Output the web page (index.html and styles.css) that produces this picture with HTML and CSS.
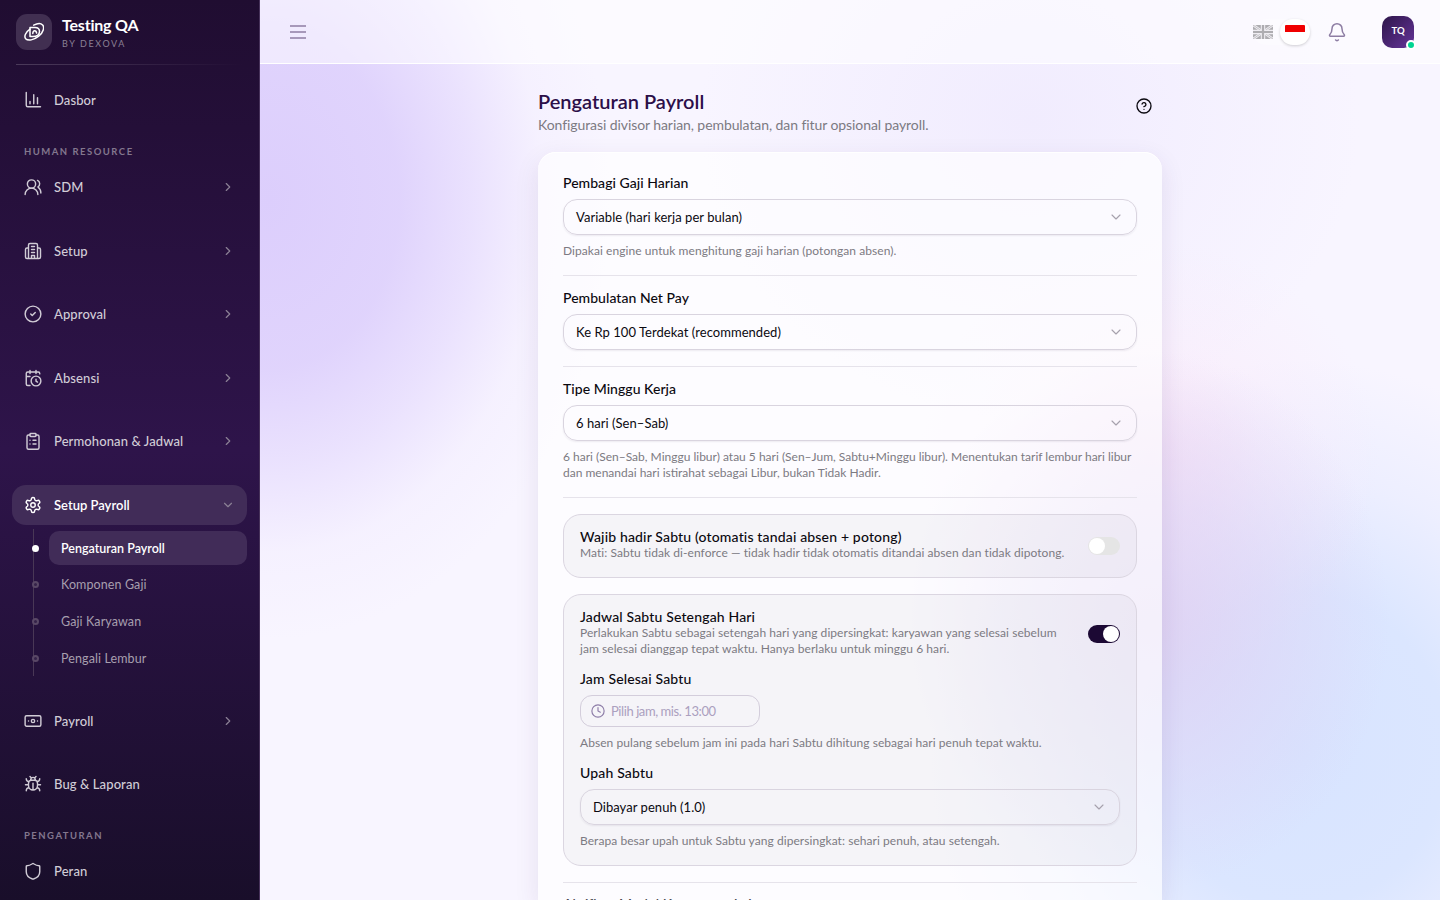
FILE: index.html
```html
<!DOCTYPE html>
<html lang="id">
<head>
<meta charset="utf-8">
<title>Pengaturan Payroll</title>
<link rel="stylesheet" href="styles.css">
</head>
<body>
<svg width="0" height="0" class="defs">
  <symbol id="chev" viewBox="0 0 24 24"><path d="m9 18 6-6-6-6"/></symbol>
  <symbol id="down" viewBox="0 0 24 24"><path d="m6 9 6 6 6-6"/></symbol>
</svg>
<div class="app">
  <aside class="sidebar">
    <div class="brand">
      <div class="logo"><svg viewBox="0 0 20 20"><path d="M6 5.500v9h2.700c4.800 0 6.800-2 6.800-5 0-2.700-1.800-4-4.500-4z"/><path d="M6 7.200C1.500 10.300-.2 14.400 1.700 16.700c2.300 2.600 8.200 1.400 13-2.500 4.800-3.900 6-9 3.900-11.200-1.700-1.800-5.300-1.600-8.900.2"/><path d="M8.800 11.500c.2-3.600 3.400-3.600 3.800-.4"/></svg></div>
      <div class="brand-text"><div class="brand-name">Testing QA</div><div class="brand-by">BY DEXOVA</div></div>
    </div>
    <div class="rule"></div>
    <nav class="nav">
      <a class="item first"><svg class="ico" viewBox="0 0 24 24"><path d="M3 2v17a2 2 0 0 0 2 2h17M8 17v-3M13 17V5M18 17V9"/></svg><span>Dasbor</span></a>
      <div class="section">HUMAN RESOURCE</div>
      <a class="item"><svg class="ico" viewBox="0 0 24 24"><circle cx="10" cy="8" r="5.500"/><path d="M18.500 22a8.500 8.500 0 0 0-17 0M22.500 20c0-3.370-2-6.500-4-8a5 5 0 0 0-.45-8.800"/></svg><span>SDM</span><svg class="chev"><use href="#chev"/></svg></a>
      <a class="item"><svg class="ico" viewBox="0 0 24 24"><path d="M6 22V4a2 2 0 0 1 2-2h8a2 2 0 0 1 2 2v18ZM6 8H4a2 2 0 0 0-2 2v10a2 2 0 0 0 2 2h2M18 8h2a2 2 0 0 1 2 2v10a2 2 0 0 1-2 2h-2M10 6h4M10 10h4M10 14h4M10 22v-4h4v4"/></svg><span>Setup</span><svg class="chev"><use href="#chev"/></svg></a>
      <a class="item"><svg class="ico" viewBox="0 0 24 24"><circle cx="12" cy="12" r="10.500"/><path d="m9 12 2 2 4-4"/></svg><span>Approval</span><svg class="chev"><use href="#chev"/></svg></a>
      <a class="item"><svg class="ico" viewBox="0 0 24 24"><path d="M21 6.500V6a2 2 0 0 0-2-2H5a2 2 0 0 0-2 2v14a2 2 0 0 0 2 2h3M16 2v4M8 2v4M3 10h5M18 17.500l-2-1.200V13.500"/><circle cx="16" cy="16" r="6.500"/></svg><span>Absensi</span><svg class="chev"><use href="#chev"/></svg></a>
      <a class="item"><svg class="ico" viewBox="0 0 24 24"><rect x="8" y="2" width="8" height="4" rx="1"/><path d="M16 4h2a2 2 0 0 1 2 2v15a2 2 0 0 1-2 2H6a2 2 0 0 1-2-2V6a2 2 0 0 1 2-2h2M12 11h4M12 16h4M8 11h.01M8 16h.01"/></svg><span>Permohonan &amp; Jadwal</span><svg class="chev"><use href="#chev"/></svg></a>
      <div class="group">
        <a class="item open"><svg class="ico" viewBox="0 0 24 24"><path d="M12.220 2h-.44a2 2 0 0 0-2 2v.18a2 2 0 0 1-1 1.730l-.43.25a2 2 0 0 1-2 0l-.15-.08a2 2 0 0 0-2.730.73l-.22.38a2 2 0 0 0 .73 2.730l.15.1a2 2 0 0 1 1 1.720v.51a2 2 0 0 1-1 1.740l-.15.09a2 2 0 0 0-.73 2.730l.22.38a2 2 0 0 0 2.730.73l.15-.08a2 2 0 0 1 2 0l.43.25a2 2 0 0 1 1 1.730V20a2 2 0 0 0 2 2h.44a2 2 0 0 0 2-2v-.18a2 2 0 0 1 1-1.730l.43-.25a2 2 0 0 1 2 0l.15.08a2 2 0 0 0 2.730-.73l.22-.39a2 2 0 0 0-.73-2.730l-.15-.08a2 2 0 0 1-1-1.740v-.5a2 2 0 0 1 1-1.740l.15-.09a2 2 0 0 0 .73-2.730l-.22-.38a2 2 0 0 0-2.730-.73l-.15.08a2 2 0 0 1-2 0l-.43-.25a2 2 0 0 1-1-1.730V4a2 2 0 0 0-2-2z"/><circle cx="12" cy="12" r="3"/></svg><span>Setup Payroll</span><svg class="chev"><use href="#down"/></svg></a>
        <div class="sub">
          <a class="subitem on"><i></i><span>Pengaturan Payroll</span></a>
          <a class="subitem"><i></i><span>Komponen Gaji</span></a>
          <a class="subitem"><i></i><span>Gaji Karyawan</span></a>
          <a class="subitem"><i></i><span>Pengali Lembur</span></a>
        </div>
      </div>
      <a class="item"><svg class="ico" viewBox="0 0 24 24"><rect x="1.500" y="5" width="21" height="14" rx="2"/><circle cx="12" cy="12" r="2.200"/><path d="M6 12h.01M18 12h.01"/></svg><span>Payroll</span><svg class="chev"><use href="#chev"/></svg></a>
      <a class="item bug"><svg class="ico" viewBox="0 0 24 24"><path d="m8 2 1.880 1.880M14.120 3.880 16 2M9 7.130v-1a3 3 0 1 1 6 0v1M12 20c-3.300 0-6-2.700-6-6v-3a4 4 0 0 1 4-4h4a4 4 0 0 1 4 4v3c0 3.300-2.700 6-6 6M12 20v-9M6.530 9C4.600 8.800 3 7.100 3 5M6 13H2M3 21c0-2.100 1.700-3.900 3.800-4M20.970 5c0 2.100-1.600 3.800-3.500 4M22 13h-4M17.200 17c2.100.1 3.800 1.900 3.800 4"/></svg><span>Bug &amp; Laporan</span></a>
      <div class="section">PENGATURAN</div>
      <a class="item last"><svg class="ico" viewBox="0 0 24 24"><path d="M21 13c0 5-3.500 8-8.300 9.700a2 2 0 0 1-1.400 0C6.500 21 3 18 3 13V6a1 1 0 0 1 1-1c2.500 0 5-1.200 7.200-2.700a1.200 1.200 0 0 1 1.600 0C15 3.800 17.500 5 20 5a1 1 0 0 1 1 1z"/></svg><span>Peran</span></a>
    </nav>
  </aside>
  <div class="page">
    <header class="topbar">
      <svg class="menu" viewBox="0 0 16 16"><path d="M.5 2h15M.5 8h15M.5 14h15"/></svg>
      <div class="tools">
        <div class="langs">
          <svg class="uk" viewBox="0 0 20 14"><path fill="#aeadb1" stroke="none" d="M0 0h20v14H0z"/><path d="M0 0l20 14M20 0L0 14" stroke="#efedf2" stroke-width="2.600"/><path d="M0 0l20 14M20 0L0 14" stroke="#b5b4b8" stroke-width=".8"/><path d="M10 0v14M0 7h20" stroke="#efedf2" stroke-width="4.400"/><path d="M10 0v14M0 7h20" stroke="#aeadb1" stroke-width="2.200"/></svg>
          <div class="lang-on"><div class="flag-id"></div></div>
        </div>
        <svg class="bell" viewBox="0 0 24 24"><path d="M10.300 21.500a2 2 0 0 0 3.400 0M3.260 15.330A1 1 0 0 0 4 17h16a1 1 0 0 0 .740-1.670C19.410 13.960 18 12.500 18 8A6 6 0 0 0 6 8c0 4.500-1.410 5.960-2.740 7.330"/></svg>
        <div class="avatar">TQ<i></i></div>
      </div>
    </header>
    <main class="main">
      <div class="head">
        <div><h1>Pengaturan Payroll</h1><p class="lead">Konfigurasi divisor harian, pembulatan, dan fitur opsional payroll.</p></div>
        <svg class="help" viewBox="0 0 24 24"><circle cx="12" cy="12" r="10.500"/><path d="M9.090 9a3 3 0 0 1 5.830 1c0 2-3 3-3 3M12 17h.01"/></svg>
      </div>
      <div class="card">
        <section class="field">
          <label>Pembagi Gaji Harian</label>
          <div class="select"><span>Variable (hari kerja per bulan)</span><svg><use href="#down"/></svg></div>
          <p class="hint">Dipakai engine untuk menghitung gaji harian (potongan absen).</p>
        </section>
        <section class="field">
          <label>Pembulatan Net Pay</label>
          <div class="select"><span>Ke Rp 100 Terdekat (recommended)</span><svg><use href="#down"/></svg></div>
        </section>
        <section class="field week">
          <label>Tipe Minggu Kerja</label>
          <div class="select"><span>6 hari (Sen–Sab)</span><svg><use href="#down"/></svg></div>
          <p class="hint tight">6 hari (Sen–Sab, Minggu libur) atau 5 hari (Sen–Jum, Sabtu+Minggu libur). Menentukan tarif lembur hari libur<br>dan menandai hari istirahat sebagai Libur, bukan Tidak Hadir.</p>
        </section>
        <div class="panel one">
          <div class="row"><div><label class="wide">Wajib hadir Sabtu (otomatis tandai absen + potong)</label><p class="hint">Mati: Sabtu tidak di-enforce — tidak hadir tidak otomatis ditandai absen dan tidak dipotong.</p></div><div class="switch"><i></i></div></div>
        </div>
        <div class="panel two">
          <div class="row"><div><label class="wide">Jadwal Sabtu Setengah Hari</label><p class="hint">Perlakukan Sabtu sebagai setengah hari yang dipersingkat: karyawan yang selesai sebelum<br>jam selesai dianggap tepat waktu. Hanya berlaku untuk minggu 6 hari.</p></div><div class="switch active"><i></i></div></div>
          <div class="inner">
            <label class="wide">Jam Selesai Sabtu</label>
            <div class="time"><svg viewBox="0 0 24 24"><circle cx="12" cy="12" r="10.500"/><path d="M12 6v6l4 2"/></svg><span>Pilih jam, mis. 13:00</span></div>
            <p class="hint">Absen pulang sebelum jam ini pada hari Sabtu dihitung sebagai hari penuh tepat waktu.</p>
          </div>
          <div class="inner">
            <label class="wide">Upah Sabtu</label>
            <div class="select"><span>Dibayar penuh (1.0)</span><svg><use href="#down"/></svg></div>
            <p class="hint">Berapa besar upah untuk Sabtu yang dipersingkat: sehari penuh, atau setengah.</p>
          </div>
        </div>
        <div class="next"><label>Aktifkan Modul Komponen Lain</label></div>
      </div>
    </main>
  </div>
</div>
</body>
</html>
```

FILE: styles.css
```css
* { box-sizing: border-box; margin: 0; padding: 0; }
body { height: 900px; overflow: hidden; font-family: Lato, "Liberation Sans", sans-serif; color: #0b0910; }
svg { fill: none; stroke: currentColor; stroke-width: 2; stroke-linecap: round; stroke-linejoin: round; flex: none; display: block; }
.defs { position: absolute; }
i { display: block; }
.app { display: flex; height: 900px; overflow: hidden;
  background:
    radial-gradient(ellipse 340px 440px at 270px 200px, rgba(218,203,252,.93) 0%, rgba(220,206,252,.86) 38%, rgba(226,214,253,.62) 60%, rgba(238,230,254,.28) 80%, rgba(248,245,255,0) 100%),
    radial-gradient(ellipse 240px 270px at 1150px 620px, rgba(222,206,241,.8) 0%, rgba(222,210,244,.55) 45%, rgba(230,220,249,0) 100%),
    radial-gradient(ellipse 230px 220px at 1150px 460px, rgba(250,220,242,.65) 0%, rgba(250,228,247,.3) 50%, rgba(248,240,255,0) 100%),
    radial-gradient(ellipse 370px 390px at 1300px 750px, rgba(214,227,255,.95) 0%, rgba(215,228,255,.88) 40%, rgba(226,232,255,.5) 70%, rgba(248,245,255,0) 100%),
    radial-gradient(ellipse 330px 300px at 1030px 120px, rgba(240,235,254,.9) 0%, rgba(248,245,255,0) 100%),
    #f8f5ff; }
.sidebar { width: 260px; flex: none; height: 900px; overflow: hidden; color: #d1ccd6; border-right: 1px solid #47325a;
  background: linear-gradient(180deg, #200d31 0%, #2e144a 50%, #190e2a 100%); }
.brand { display: flex; gap: 10px; padding: 14px 16px 0; height: 64px; }
.logo { width: 36px; height: 36px; border-radius: 11px; background: #412f51; color: #fff; display: grid; place-items: center; }
.logo svg { width: 20px; height: 20px; stroke-width: 1.500; }
.brand-name { color: #fff; font-weight: 700; font-size: 16px; line-height: 20px; margin-top: 1px; letter-spacing: -.2px; white-space: nowrap; }
.brand-by { font-size: 9px; line-height: 12px; margin-top: 3px; letter-spacing: 1.600px; color: #8b8095; }
.rule { height: 1px; margin: 0 16px; background: linear-gradient(90deg, #4b3a5a, transparent); }
.nav { padding: 15px 12px 0; }
.item { display: flex; align-items: center; height: 40px; margin-bottom: 23.500px; padding: 0 11px 0 12px; font-size: 13px; font-weight: 500; }
.item.first, .item.bug { margin-bottom: 22px; }
.item.last { margin-bottom: 0; }
.item span { flex: 1; margin-left: 12px; letter-spacing: .1px; }
.ico { width: 18px; height: 18px; stroke-width: 1.900; }
.chev { width: 14px; height: 14px; margin-right: 1px; color: #8b8095; }
.section { height: 20px; line-height: 20px; padding-left: 12px; font-size: 9.500px; font-weight: 700; letter-spacing: 1.480px; color: #83778e; margin-bottom: 5px; }
.open { color: #fff; background: #412c58; border-radius: 14px; margin: 0; width: 235px; font-weight: 600; }
.item.open span { letter-spacing: 0; }
.group { margin-bottom: 25px; }
.sub { margin: 4px 0 0 21px; border-left: 1px solid #493856; padding: 2px 0; width: 214px; height: 147px; }
.subitem { display: flex; align-items: center; height: 34px; margin-bottom: 2.700px; font-size: 12.500px; color: #a79fae; }
.subitem i { width: 7px; height: 7px; border-radius: 50%; border: 2px solid #594866; background: #35224a; margin: 1px 10px 0 -2px; }
.subitem span { flex: 1; height: 34px; line-height: 33px; padding: 1px 0 0 12px; border-radius: 10px; letter-spacing: .1px; }
.subitem.on { color: #fff; font-weight: 600; }
.subitem.on i { background: #fff; border-color: #fff; }
.subitem.on span { background: #412c58; letter-spacing: 0; }
.page { flex: 1; height: 900px; overflow: hidden; }
.topbar { height: 64px; padding: 0 26px 0 30px; display: flex; align-items: center; justify-content: space-between; background: rgba(255,255,255,.5); border-bottom: 1px solid #fff; }
.menu { width: 16px; height: 16px; color: #8f7da4; stroke-width: 1.600; }
.tools { display: flex; align-items: center; }
.langs { display: flex; align-items: center; gap: 7px; background: rgba(255,255,255,.3); border-radius: 16px; }
.uk { width: 20px; height: 14px; stroke-linecap: butt; overflow: hidden; }
.lang-on { width: 30px; height: 26px; border-radius: 13px; background: #fff; box-shadow: 0 1px 3px rgba(0,0,0,.18); padding: 6px 5px; }
.flag-id { height: 14px; border-radius: 1px; background: linear-gradient(#f00000 50%, #fff 50%); }
.bell { width: 20px; height: 20px; margin-left: 17px; color: #8d7da3; stroke-width: 1.800; }
.avatar { position: relative; width: 32px; height: 32px; margin-left: 35px; border-radius: 10px; background: linear-gradient(135deg, #2e164a, #653499); color: #fff; font-size: 9.500px; font-weight: 700; text-align: center; line-height: 30px; }
.avatar i { position: absolute; right: -2px; bottom: -2px; width: 10px; height: 10px; border-radius: 50%; background: #00d492; border: 2px solid #fff; }
.main { width: 624px; margin: 23px auto 0; }
.head { display: flex; justify-content: space-between; height: 65px; }
h1 { font-size: 20px; line-height: 28px; font-weight: 600; color: #2c0f49; letter-spacing: 0; }
.lead { font-size: 14px; line-height: 20px; color: #7c7a82; letter-spacing: -.08px; }
.help { width: 16px; height: 16px; margin: 11px 10px 0 0; }
.card { height: 748px; overflow: hidden; border-radius: 18px 18px 0 0; background: rgba(255,255,255,.65); padding: 24px 25px 0; box-shadow: 0 8px 24px rgba(60,30,100,.1), inset 0 1px 0 #fff; }
label { display: block; font-size: 14px; line-height: 14px; font-weight: 500; white-space: nowrap; letter-spacing: .04px; }
.wide { letter-spacing: .16px; }
.field { border-bottom: 1px solid #e6e3eb; padding-bottom: 16px; margin-bottom: 15px; }
.week { margin-bottom: 16px; }
.select { height: 36px; margin-top: 9px; border: 1px solid #d9d4df; border-radius: 14px; padding: 0 12px 1px; display: flex; align-items: center; justify-content: space-between; font-size: 13px; letter-spacing: .04px; box-shadow: 0 1px 2px rgba(30,10,50,.07); }
.select svg { width: 16px; height: 16px; color: #a6a1ad; stroke-width: 1.700; }
.hint { font-size: 12px; line-height: 16px; color: #7c7a82; white-space: nowrap; letter-spacing: .06px; }
.hint.tight { letter-spacing: 0; }
.field .hint { margin-top: 8px; }
.panel { border: 1px solid #dbd6e1; border-radius: 18px; background: rgba(40,20,70,.035); padding: 16px; margin-bottom: 16px; }
.one { height: 64px; }
.two { height: 272px; }
.row { display: flex; justify-content: space-between; align-items: center; }
.row label { margin: -1px 0 1px; }
.switch { width: 32px; height: 18px; border-radius: 9px; background: #e5e5e5; padding: 1px; }
.switch i { width: 16px; height: 16px; border-radius: 50%; background: #fff; }
.switch.active { background: #1c0934; }
.switch.active i { margin-left: 14px; }
.inner { margin-top: 15px; }
.inner .hint { margin-top: 8px; }
.time { width: 180px; height: 32px; margin-top: 9px; border: 1px solid #d3cddb; border-radius: 12px; padding: 0 10px 1px; display: flex; align-items: center; gap: 6px; font-size: 13px; letter-spacing: -.42px; color: #aba0bf; }
.time svg { width: 14px; height: 14px; color: #8d7da8; }
.next { border-top: 1px solid #e6e3eb; padding-top: 14px; color: #4a4750; }
```
